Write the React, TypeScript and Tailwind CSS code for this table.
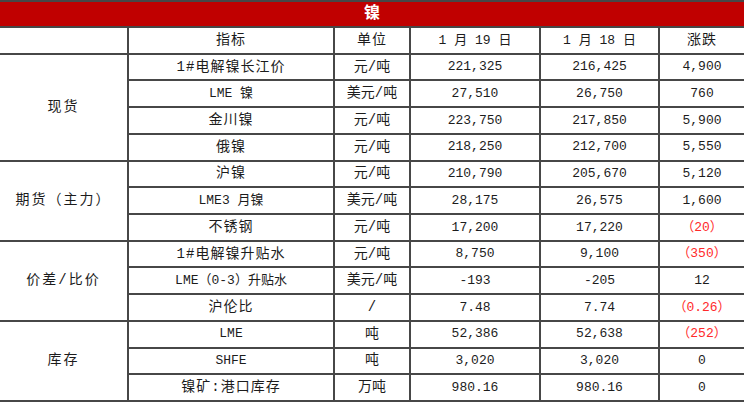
import React from 'react';

type Row = {
    name: string;
    unit: string;
    d19: string;
    d18: string;
    chg: string;
    neg?: boolean;
};

// category label + the rows that sit under it
const GROUPS: { label: string; rows: Row[] }[] = [
    {
        label: '现货',
        rows: [
            { name: '1#电解镍长江价', unit: '元/吨', d19: '221,325', d18: '216,425', chg: '4,900' },
            { name: 'LME 镍', unit: '美元/吨', d19: '27,510', d18: '26,750', chg: '760' },
            { name: '金川镍', unit: '元/吨', d19: '223,750', d18: '217,850', chg: '5,900' },
            { name: '俄镍', unit: '元/吨', d19: '218,250', d18: '212,700', chg: '5,550' },
        ],
    },
    {
        label: '期货（主力）',
        rows: [
            { name: '沪镍', unit: '元/吨', d19: '210,790', d18: '205,670', chg: '5,120' },
            { name: 'LME3 月镍', unit: '美元/吨', d19: '28,175', d18: '26,575', chg: '1,600' },
            { name: '不锈钢', unit: '元/吨', d19: '17,200', d18: '17,220', chg: '（20）', neg: true },
        ],
    },
    {
        label: '价差/比价',
        rows: [
            { name: '1#电解镍升贴水', unit: '元/吨', d19: '8,750', d18: '9,100', chg: '（350）', neg: true },
            { name: 'LME（0-3）升贴水', unit: '美元/吨', d19: '-193', d18: '-205', chg: '12' },
            { name: '沪伦比', unit: '/', d19: '7.48', d18: '7.74', chg: '（0.26）', neg: true },
        ],
    },
    {
        label: '库存',
        rows: [
            { name: 'LME', unit: '吨', d19: '52,386', d18: '52,638', chg: '（252）', neg: true },
            { name: 'SHFE', unit: '吨', d19: '3,020', d18: '3,020', chg: '0' },
            { name: '镍矿:港口库存', unit: '万吨', d19: '980.16', d18: '980.16', chg: '0' },
        ],
    },
];

const cell = 'flex items-center justify-center border-b-2 border-r-2 border-[#474747] whitespace-nowrap';
const lastCell = 'flex items-center justify-center border-b-2 border-[#474747] whitespace-nowrap';

const SPAN: Record<number, string> = {
    3: 'row-span-3',
    4: 'row-span-4',
};

const hasLatin = (s: string) => /[A-Z]/.test(s);

export default function App() {
    return (
        <div className="w-[744px] h-[402px] bg-white overflow-hidden text-[14px] text-[#1c1c1c] font-['Liberation_Mono','Noto_Sans_CJK_SC',monospace]">
            <div className="border-t-2 border-[#474747]" />
            {/* title bar */}
            <div className="h-[26px] bg-[#c00000] border-b-2 border-[#474747] flex items-center justify-center text-white font-bold text-[16px]">
                镍
            </div>

            <div className="grid h-[374px] grid-cols-[129px_206px_76px_130px_119px_1fr] grid-rows-[repeat(14,minmax(0,1fr))]">
                {/* header row */}
                <div className={cell} />
                <div className={`${cell} tracking-[1px]`}>指标</div>
                <div className={`${cell} tracking-[1px]`}>单位</div>
                <div className={`${cell} text-[13px]`}>1 月 19 日</div>
                <div className={`${cell} text-[13px]`}>1 月 18 日</div>
                <div className={`${lastCell} tracking-[1px]`}>涨跌</div>

                {GROUPS.map(g => (
                    <React.Fragment key={g.label}>
                        {g.rows.map((r, i) => (
                            <React.Fragment key={r.name}>
                                {i === 0 && (
                                    <div className={`${cell} ${SPAN[g.rows.length]} tracking-[2px]`}>{g.label}</div>
                                )}
                                <div className={`${cell} ${hasLatin(r.name) ? 'text-[13px]' : 'tracking-[1px]'}`}>{r.name}</div>
                                <div className={cell}>{r.unit}</div>
                                <div className={`${cell} text-[13px]`}>{r.d19}</div>
                                <div className={`${cell} text-[13px]`}>{r.d18}</div>
                                <div className={`${lastCell} text-[13px] ${r.neg ? 'text-[#ff2a2a]' : ''}`}>{r.chg}</div>
                            </React.Fragment>
                        ))}
                    </React.Fragment>
                ))}
            </div>
        </div>
    );
}
